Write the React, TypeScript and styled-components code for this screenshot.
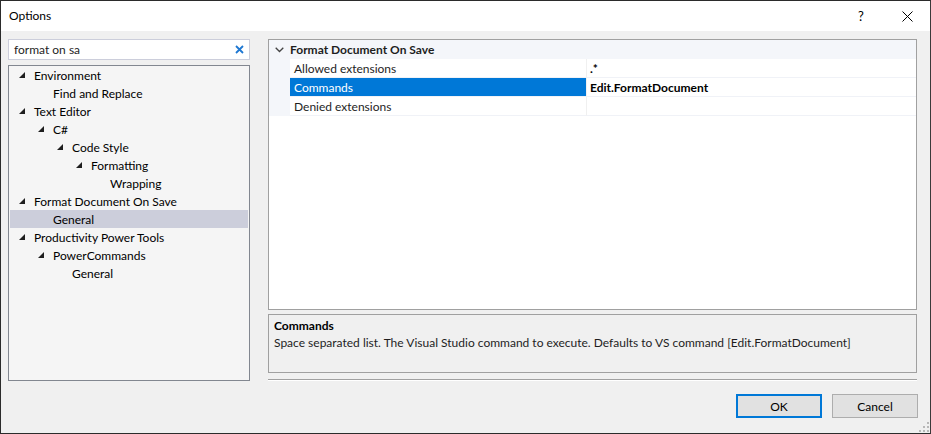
import React from "react";
import styled, { createGlobalStyle } from "styled-components";

const Global = createGlobalStyle`
  html, body { margin: 0; padding: 0; background: #f0f0f0; }
  * { box-sizing: border-box; }
  body { font-family: "Lato", "Noto Sans", sans-serif; font-size: 12px; color: #1e1e1e; }
`;

const Window = styled.div`
  width: 931px;
  height: 434px;
  display: flex;
  flex-direction: column;
  background: #f0f0f0;
  border: 1px solid #2b2b2b;
  border-right-color: #3a3a3a;
  overflow: hidden;
`;

const TitleBar = styled.div`
  height: 30px;
  background: #fff;
  display: flex;
  align-items: center;
  flex-shrink: 0;
`;

const Title = styled.div`
  flex: 1;
  padding-left: 8px;
  padding-bottom: 1px;
  font-size: 12px;
  color: #000;
`;

const CaptionButton = styled.div`
  width: 46px;
  height: 30px;
  display: flex;
  align-items: center;
  justify-content: center;
  font-size: 13px;
  color: #000;
`;

const Body = styled.div`
  flex: 1;
  display: flex;
  flex-direction: column;
  padding: 8px 12px 0 7px;
`;

const Main = styled.div`
  display: flex;
  gap: 18px;
  height: 342px;
`;

const LeftPane = styled.div`
  width: 242px;
  display: flex;
  flex-direction: column;
  gap: 5px;
`;

const SearchBox = styled.div`
  height: 21px;
  background: #fff;
  border: 1px solid #cccedb;
  display: flex;
  align-items: center;
  padding: 0 5px 0 5px;
`;

const SearchText = styled.div`
  flex: 1;
  color: #1e1e1e;
`;

const Tree = styled.div`
  flex: 1;
  background: #f5f5f5;
  border: 1px solid #828790;
  padding: 0 1px;
  display: flex;
  flex-direction: column;
`;

const TreeRow = styled.div<{ $level: number; $selected?: boolean }>`
  height: 18px;
  display: flex;
  align-items: center;
  padding-left: ${(p) => 9 + p.$level * 19}px;
  background: ${(p) => (p.$selected ? "#ccceDB" : "transparent")};
  color: #000;
  white-space: nowrap;
`;

const Expander = styled.span`
  width: 15px;
  height: 18px;
  display: flex;
  align-items: center;
  flex-shrink: 0;
`;

const RightPane = styled.div`
  width: 649px;
  display: flex;
  flex-direction: column;
`;

const Grid = styled.div`
  height: 271px;
  background: #fff;
  border: 1px solid #a0a0a0;
  display: flex;
  flex-direction: column;
`;

const Category = styled.div`
  height: 19px;
  background: #f4f6fa;
  display: flex;
  align-items: center;
  font-weight: bold;
`;

const Chevron = styled.span`
  width: 21px;
  display: flex;
  justify-content: center;
  align-items: center;
`;

const PropRow = styled.div`
  height: 19px;
  display: flex;
`;

const Margin = styled.div`
  width: 21px;
  background: #f4f6fa;
  flex-shrink: 0;
`;

const PropName = styled.div<{ $selected?: boolean }>`
  width: 297px;
  padding-left: 4px;
  display: flex;
  align-items: center;
  background: ${(p) => (p.$selected ? "#0078d7" : "#fff")};
  color: ${(p) => (p.$selected ? "#fff" : "#1e1e1e")};
  border-right: 1px solid #f0f0f0;
  border-bottom: 1px solid #f0f2f7;
`;

const PropValue = styled.div`
  flex: 1;
  padding-left: 3px;
  display: flex;
  align-items: center;
  font-weight: bold;
  color: #000;
  border-bottom: 1px solid #f0f2f7;
`;

const Desc = styled.div`
  margin-top: 4px;
  height: 59px;
  border: 1px solid #a0a0a0;
  background: #f0f0f0;
  padding: 3px 5px;
  display: flex;
  flex-direction: column;
  gap: 1px;
`;

const DescTitle = styled.div`
  font-weight: bold;
  color: #000;
  line-height: 16px;
`;

const DescText = styled.div`
  color: #1e1e1e;
  line-height: 16px;
`;

const Separator = styled.div`
  margin-top: 6px;
  height: 2px;
  border-top: 1px solid #a0a0a0;
  border-bottom: 1px solid #ffffff;
`;

const Footer = styled.div`
  display: flex;
  justify-content: flex-end;
  gap: 10px;
  padding-top: 13px;
  position: relative;
  flex: 1;
`;

const Button = styled.div<{ $default?: boolean }>`
  width: 86px;
  height: 24px;
  background: #e1e1e1;
  border: ${(p) => (p.$default ? "2px solid #0078d7" : "1px solid #adadad")};
  display: flex;
  align-items: center;
  justify-content: center;
  color: #000;
`;

const Grip = styled.svg`
  position: absolute;
  right: -11px;
  bottom: 1px;
`;

const Tri = () => (
  <svg width="6" height="6" viewBox="0 0 6 6">
    <polygon points="6,0 6,6 0,6" fill="#1e1e1e" />
  </svg>
);

type Node = { label: string; level: number; expanded?: boolean; selected?: boolean };

const nodes: Node[] = [
  { label: "Environment", level: 0, expanded: true },
  { label: "Find and Replace", level: 1 },
  { label: "Text Editor", level: 0, expanded: true },
  { label: "C#", level: 1, expanded: true },
  { label: "Code Style", level: 2, expanded: true },
  { label: "Formatting", level: 3, expanded: true },
  { label: "Wrapping", level: 4 },
  { label: "Format Document On Save", level: 0, expanded: true },
  { label: "General", level: 1, selected: true },
  { label: "Productivity Power Tools", level: 0, expanded: true },
  { label: "PowerCommands", level: 1, expanded: true },
  { label: "General", level: 2 },
];

const props = [
  { name: "Allowed extensions", value: ".*" },
  { name: "Commands", value: "Edit.FormatDocument", selected: true },
  { name: "Denied extensions", value: "" },
];

export default function App() {
  return (
    <>
      <Global />
      <Window>
        <TitleBar>
          <Title>Options</Title>
          <CaptionButton>?</CaptionButton>
          <CaptionButton>
            <svg width="11" height="11" viewBox="0 0 11 11">
              <path d="M0.5 0.5 L10.5 10.5 M10.5 0.5 L0.5 10.5" stroke="#000" strokeWidth="1" />
            </svg>
          </CaptionButton>
        </TitleBar>
        <Body>
          <Main>
            <LeftPane>
              <SearchBox>
                <SearchText>format on sa</SearchText>
                <svg width="9" height="9" viewBox="0 0 9 9">
                  <path d="M1 1 L8 8 M8 1 L1 8" stroke="#1e78d2" strokeWidth="1.8" />
                </svg>
              </SearchBox>
              <Tree>
                {nodes.map((n, i) => (
                  <TreeRow key={i} $level={n.level} $selected={n.selected}>
                    <Expander>{n.expanded ? <Tri /> : null}</Expander>
                    {n.label}
                  </TreeRow>
                ))}
              </Tree>
            </LeftPane>
            <RightPane>
              <Grid>
                <Category>
                  <Chevron>
                    <svg width="9" height="6" viewBox="0 0 9 6">
                      <path d="M0.7 0.7 L4.5 4.5 L8.3 0.7" stroke="#444" strokeWidth="1.3" fill="none" />
                    </svg>
                  </Chevron>
                  Format Document On Save
                </Category>
                {props.map((p) => (
                  <PropRow key={p.name}>
                    <Margin />
                    <PropName $selected={p.selected}>{p.name}</PropName>
                    <PropValue>{p.value}</PropValue>
                  </PropRow>
                ))}
              </Grid>
              <Desc>
                <DescTitle>Commands</DescTitle>
                <DescText>
                  Space separated list. The Visual Studio command to execute. Defaults to VS command [Edit.FormatDocument]
                </DescText>
              </Desc>
              <Separator />
            </RightPane>
          </Main>
          <Footer>
            <Button $default>OK</Button>
            <Button>Cancel</Button>
            <Grip width="10" height="10" viewBox="0 0 10 10">
              {[
                [8, 0],
                [8, 4],
                [4, 4],
                [8, 8],
                [4, 8],
                [0, 8],
              ].map(([x, y], i) => (
                <rect key={i} x={x} y={y} width="2" height="2" fill="#b8b8b8" />
              ))}
            </Grip>
          </Footer>
        </Body>
      </Window>
    </>
  );
}
